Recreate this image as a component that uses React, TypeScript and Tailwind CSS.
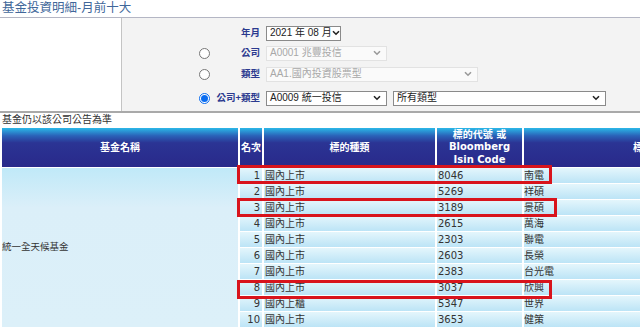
import React from 'react';

type Row = { rank: number; kind: string; code: string; name: string };

const rows: Row[] = [
    { rank: 1, kind: '國內上市', code: '8046', name: '南電' },
    { rank: 2, kind: '國內上市', code: '5269', name: '祥碩' },
    { rank: 3, kind: '國內上市', code: '3189', name: '景碩' },
    { rank: 4, kind: '國內上市', code: '2615', name: '萬海' },
    { rank: 5, kind: '國內上市', code: '2303', name: '聯電' },
    { rank: 6, kind: '國內上市', code: '2603', name: '長榮' },
    { rank: 7, kind: '國內上市', code: '2383', name: '台光電' },
    { rank: 8, kind: '國內上市', code: '3037', name: '欣興' },
    { rank: 9, kind: '國內上櫃', code: '5347', name: '世界' },
    { rank: 10, kind: '國內上市', code: '3653', name: '健策' },
];

const Chevron: React.FC<{ disabled?: boolean }> = ({ disabled }) => (
    <svg width="8" height="6" viewBox="0 0 8 6" className="shrink-0">
        <path d="M1 1.2 L4 4.2 L7 1.2" fill="none" stroke={disabled ? '#9a9a9a' : '#222'} strokeWidth="1.6" />
    </svg>
);

const FakeSelect: React.FC<{ label: string; width: string; disabled?: boolean }> = ({ label, width, disabled }) => (
    <div
        className={`${width} h-[15px] flex items-center justify-between pl-[3px] pr-[5px] border text-[10px] leading-none ${
            disabled ? 'bg-[#fafafa] border-[#e2e2e2] text-[#a8a8a8]' : 'bg-white border-[#8a8a8a] text-[#222]'
        }`}
    >
        <span className="whitespace-nowrap">{label}</span>
        <Chevron disabled={disabled} />
    </div>
);

const Radio: React.FC<{ checked?: boolean }> = ({ checked }) => (
    <div className="w-[11px] h-[11px] shrink-0 flex items-center justify-center">
        {checked ? (
            <div className="w-[11px] h-[11px] rounded-full border border-[#0a6cf0] bg-white flex items-center justify-center">
                <div className="w-[7px] h-[7px] rounded-full bg-[#0a6cf0]"></div>
            </div>
        ) : (
            <div className="w-[11px] h-[11px] rounded-full border border-[#777] bg-white"></div>
        )}
    </div>
);

const FormRow: React.FC<{ radio?: 'on' | 'off'; label: string; children: React.ReactNode; className?: string }> = ({
    radio,
    label,
    children,
    className = '',
}) => (
    <div className={`flex items-center h-[20px] ${className}`}>
        <div className="w-[77px] shrink-0"></div>
        {radio ? <Radio checked={radio === 'on'} /> : <div className="w-[11px] shrink-0"></div>}
        <div className="w-[50px] shrink-0 text-right text-[9.5px] font-bold text-[#2b3a8f] whitespace-nowrap">{label}</div>
        <div className="ml-[6px] flex items-center gap-[6px]">{children}</div>
    </div>
);

const headCell = 'p-0 h-[39px] text-white font-bold text-[10px] align-middle bg-[linear-gradient(to_bottom,#2bb8e8_0%,#2a62b8_20%,#2b3494_38%,#29298a_100%)]';
const bodyCell = 'p-0 h-[15px] leading-[15px] bg-[linear-gradient(to_bottom,#e4f6fc,#bce4f6)]';

const App: React.FC = () => {
    return (
        <div className="w-[640px] h-screen overflow-hidden bg-white text-[#333] font-['Liberation_Sans','Noto_Sans_CJK_TC',sans-serif]">
            {/* Title */}
            <div className="h-[17px] pl-[2px] text-[12.5px] leading-[17px] text-[#41679a] whitespace-nowrap">基金投資明細-月前十大</div>

            {/* Query form */}
            <div className="flex border-t border-t-[#b4b6c4] border-b-2 border-b-[#a9a9a9]">
                <div className="w-[122px] shrink-0 bg-white border-r border-r-[#c4c4c4]"></div>
                <div className="flex-1 bg-[#f3f3f3] pt-[5px] pb-[3px]">
                    <FormRow label="年月">
                        <FakeSelect label="2021 年 08 月" width="w-[75px]" />
                    </FormRow>
                    <FormRow radio="off" label="公司">
                        <FakeSelect label="A0001 兆豐投信" width="w-[121px]" disabled />
                    </FormRow>
                    <FormRow radio="off" label="類型" className="mt-[1px]">
                        <FakeSelect label="AA1.國內投資股票型" width="w-[212px]" disabled />
                    </FormRow>
                    <FormRow radio="on" label="公司+類型" className="mt-[4px]">
                        <FakeSelect label="A0009 統一投信" width="w-[121px]" />
                        <FakeSelect label="所有類型" width="w-[213px]" />
                    </FormRow>
                </div>
            </div>

            <div className="h-[14px] pl-[2px] text-[10px] leading-[14px] text-[#333] whitespace-nowrap">基金仍以該公司公告為準</div>

            {/* Result table */}
            <div className="relative">
                <table className="table-fixed w-[784px] border-separate border-spacing-x-[2px] border-spacing-y-[1px] font-['DejaVu_Sans','Noto_Sans_CJK_TC',sans-serif] text-[10px] text-[#333]">
                    <colgroup>
                        <col className="w-[236px]" />
                        <col className="w-[22px]" />
                        <col className="w-[171px]" />
                        <col className="w-[85px]" />
                        <col className="w-[258px]" />
                    </colgroup>
                    <thead>
                        <tr>
                            <th className={headCell}>基金名稱</th>
                            <th className={headCell}>名次</th>
                            <th className={headCell}>標的種類</th>
                            <th className={`${headCell} text-[9px] leading-[12.5px]`}>
                                <div>標的代號 或</div>
                                <div>Bloomberg</div>
                                <div>Isin Code</div>
                            </th>
                            <th className={headCell}>標的名稱</th>
                        </tr>
                    </thead>
                    <tbody>
                        {rows.map((r, i) => (
                            <tr key={r.rank}>
                                {i === 0 && (
                                    <td
                                        rowSpan={rows.length}
                                        className="p-0 align-middle text-[9.5px] bg-[linear-gradient(to_bottom,#c0e9f8_0%,#dbeff9_25%,#dcf0f9_100%)]"
                                    >
                                        統一全天候基金
                                    </td>
                                )}
                                <td className={`${bodyCell} text-right pr-[2px]`}>{r.rank}</td>
                                <td className={`${bodyCell} pl-[1px]`}>{r.kind}</td>
                                <td className={`${bodyCell} pl-[1px]`}>{r.code}</td>
                                <td className={bodyCell}>{r.name}</td>
                            </tr>
                        ))}
                    </tbody>
                </table>

                {/* Red highlight annotations */}
                <div className="absolute left-[237px] top-[38px] w-[315px] h-[19px] border-[3px] border-[#d8141c]"></div>
                <div className="absolute left-[237px] top-[71px] w-[320px] h-[19px] border-[3px] border-[#d8141c]"></div>
                <div className="absolute left-[237px] top-[153px] w-[315px] h-[19px] border-[3px] border-[#d8141c]"></div>
            </div>
        </div>
    );
};

export default App;
